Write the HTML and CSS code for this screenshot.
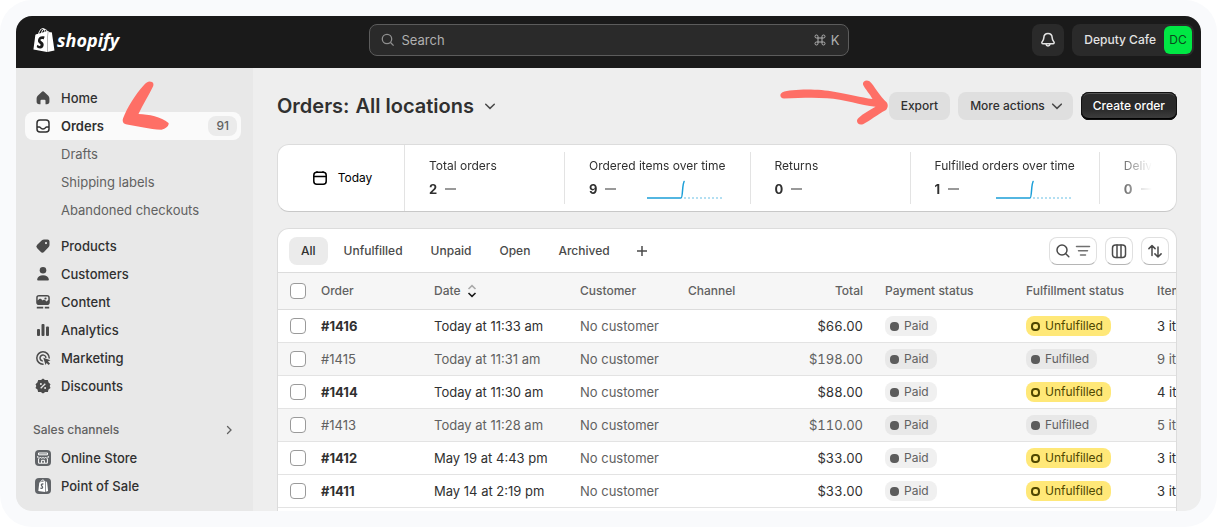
FILE: index.html
```html
<!DOCTYPE html>
<html lang="en">
<head>
<meta charset="utf-8">
<meta name="viewport" content="width=device-width, initial-scale=1">
<title>Orders</title>
<link rel="stylesheet" href="styles.css">
</head>
<body>
<div class="frame">
<div class="app">
  <header class="topbar">
    <a class="brand" href="#">
      <svg class="brand-mark" viewBox="0 0 24 24" aria-hidden="true"><path fill="#fff" d="M15.337 23.979l7.216-1.561s-2.604-17.613-2.625-17.73c-.018-.116-.114-.192-.211-.192s-1.929-.136-1.929-.136-1.275-1.274-1.439-1.411c-.045-.037-.075-.057-.121-.074l-.914 21.104h.023zM11.71 11.305s-.81-.424-1.774-.424c-1.447 0-1.504.906-1.504 1.141 0 1.232 3.24 1.715 3.24 4.629 0 2.295-1.44 3.76-3.406 3.76-2.354 0-3.54-1.465-3.54-1.465l.646-2.086s1.245 1.066 2.28 1.066c.675 0 .975-.545.975-.932 0-1.619-2.654-1.694-2.654-4.359-.034-2.237 1.571-4.416 4.827-4.416 1.257 0 1.875.361 1.875.361l-.945 2.715-.02.01zM11.17.83c.136 0 .271.038.405.135-.984.465-2.064 1.639-2.508 3.992-.656.213-1.293.405-1.889.578C7.697 3.75 8.951.84 11.17.84V.83zm1.235 2.949v.135c-.754.232-1.583.484-2.394.736.466-1.777 1.333-2.645 2.085-2.971.193.501.309 1.176.309 2.1zm.539-2.234c.694.074 1.141.867 1.429 1.755-.349.114-.735.231-1.158.366v-.252c0-.752-.096-1.371-.271-1.871v.002zm2.992 1.289c-.02 0-.06.021-.078.021s-.289.075-.714.21c-.423-1.233-1.176-2.37-2.508-2.37h-.115C12.135.209 11.669 0 11.265 0 8.159 0 6.675 3.877 6.21 5.846c-1.194.365-2.063.636-2.16.674-.675.213-.694.232-.772.87-.075.462-1.83 14.063-1.83 14.063L15.009 24l.927-21.166z"/></svg>
      <span class="brand-name">shopify</span>
    </a>
    <label class="search">
      <svg class="search-icon" viewBox="0 0 16 16" aria-hidden="true"><circle cx="7" cy="7" r="4.7"/><path d="M10.5 10.5 13.6 13.6"/></svg>
      <input class="search-input" type="text" placeholder="Search" aria-label="Search">
      <span class="search-key"><svg class="cmd" viewBox="0 0 12 12" aria-hidden="true"><path d="M4 4V2.6A1.5 1.5 0 1 0 2.6 4H9.4A1.5 1.5 0 1 0 8 2.6V9.4A1.5 1.5 0 1 0 9.4 8H2.6A1.5 1.5 0 1 0 4 9.4Z"/></svg>K</span>
    </label>
    <div class="top-actions">
      <button class="top-btn bell" aria-label="Notifications"><svg viewBox="0 0 20 20" aria-hidden="true"><path d="M10 3.6c-2.6 0-4.1 1.9-4.2 4.3-.1 2-.5 2.6-1.6 3.8-.8.9-.4 2.1.9 2.1h9.8c1.300 0 1.700-1.200.9-2.100-1.100-1.200-1.500-1.800-1.600-3.800C14.100 5.500 12.600 3.600 10 3.600Z"/><path d="M7.900 14.200a2.150 2.150 0 0 0 4.200 0"/></svg></button>
      <button class="top-btn store">Deputy Cafe<span class="avatar">DC</span></button>
    </div>
  </header>

  <div class="body">
    <nav class="sidebar">
      <a class="nav-item" href="#"><svg class="ico" viewBox="0 0 20 20" aria-hidden="true"><path d="M8.700 3.900a1.800 1.800 0 0 1 2.600 0l4 3.900c.7.700 1.100 1.600 1.100 2.600v3.300c0 1.500-1 2.500-2.500 2.500h-1.400v-3.400a1 1 0 0 0-1-1h-3a1 1 0 0 0-1 1v3.400H6.100c-1.500 0-2.500-1-2.500-2.500v-3.300c0-1 .4-1.900 1.100-2.600Z"/></svg>Home</a>
      <div class="nav-current">
        <a class="nav-item is-active" href="#" aria-current="page"><svg class="ico line" viewBox="0 0 20 20" aria-hidden="true"><rect x="4" y="4" width="12" height="12" rx="3"/><path d="M4 11h2.300c.5 0 .8.200 1.100.6.6.8 1.300 1.300 2.600 1.300s2-.5 2.600-1.300c.3-.4.6-.6 1.100-.6H16"/></svg>Orders<span class="count">91</span></a>
        <svg class="mark mark-nav" viewBox="0 0 48 50" aria-hidden="true"><path d="M31 2C28 .5 25.500 2.200 23 5 14 15 6.500 27 2 38.500 1 42 2.500 44 6 44.500c11 1.500 22 5 34.500 5.200C45 49 48.500 45 47.500 43 40 36.500 28 34.500 17.500 34 22 24 28 15 32 6.500 32.800 4.500 32.500 3 31 2Z"/></svg>
      </div>
      <a class="nav-item sub" href="#">Drafts</a>
      <a class="nav-item sub" href="#">Shipping labels</a>
      <a class="nav-item sub last" href="#">Abandoned checkouts</a>
      <a class="nav-item" href="#"><svg class="ico" viewBox="0 0 20 20" aria-hidden="true"><path fill-rule="evenodd" d="M11 3.500h3.500a2 2 0 0 1 2 2V9c0 .8-.3 1.500-.8 2l-4.500 4.700a2.500 2.500 0 0 1-3.600 0L4.200 12.300a2.500 2.500 0 0 1 0-3.600L8.900 4.300c.6-.5 1.300-.8 2.100-.8ZM13 8.200a1.100 1.100 0 1 0 0-2.200 1.100 1.100 0 0 0 0 2.200Z"/></svg>Products</a>
      <a class="nav-item" href="#"><svg class="ico" viewBox="0 0 20 20" aria-hidden="true"><circle cx="10" cy="6.300" r="3.300"/><path d="M4.200 15c.5-2.200 2.800-3.700 5.800-3.700s5.300 1.500 5.800 3.700c.2 1-.4 1.600-1.300 1.600h-9c-.9 0-1.500-.6-1.300-1.600Z"/></svg>Customers</a>
      <a class="nav-item" href="#"><svg class="ico" viewBox="0 0 20 20" aria-hidden="true"><path fill-rule="evenodd" d="M6 3h8a2.800 2.800 0 0 1 2.800 2.800v4.400A2.800 2.800 0 0 1 14 13H6a2.800 2.800 0 0 1-2.800-2.800V5.800A2.800 2.800 0 0 1 6 3Zm0 1.500c-.8 0-1.300.5-1.300 1.300v2.800l1.500-1.500c.6-.6 1.300-.6 1.900 0l1.500 1.500.6-.5c.6-.6 1.300-.6 1.900 0l1.300 1.300 1.900-1.500V5.800c0-.8-.5-1.300-1.300-1.300Z"/><circle cx="12.500" cy="6.500" r="1.100"/><path d="M3.800 14.800h6.400v1.600H3.800zM11.800 14.800h4.400v1.600h-4.400z"/></svg>Content</a>
      <a class="nav-item" href="#"><svg class="ico" viewBox="0 0 20 20" aria-hidden="true"><rect x="4" y="9" width="3" height="7" rx="1"/><rect x="8.500" y="4" width="3" height="12" rx="1"/><rect x="13" y="6.500" width="3" height="9.500" rx="1"/></svg>Analytics</a>
      <a class="nav-item" href="#"><svg class="ico" viewBox="0 0 20 20" aria-hidden="true"><path class="arc" d="M16.200 10A6.200 6.200 0 1 0 10 16.200M12.900 9.200A3 3 0 1 0 9.200 12.900"/><path d="M10.300 9.700 17.500 12.200 14.900 13.500 17 15.600 15.700 17 13.600 14.900 12.500 17Z"/></svg>Marketing</a>
      <a class="nav-item" href="#"><svg class="ico" viewBox="0 0 20 20" aria-hidden="true"><path d="M10 2.500 12 4.100 14.800 3.900 15.600 6.600 17.500 8.200 16.700 10 17.500 12 15.500 13.500 14.900 16.100 12.200 16 10 17.500 7.800 16 5.100 16.100 4.500 13.500 2.500 12 3.300 10 2.500 8.200 4.400 6.600 5.200 3.900 8 4.100Z"/><path class="cut" d="M7.700 12.300 12.300 7.700"/><circle class="hole" cx="7.900" cy="8" r="1"/><circle class="hole" cx="12.100" cy="12" r="1"/></svg>Discounts</a>
      <a class="nav-head" href="#">Sales channels<svg class="chev" viewBox="0 0 16 16" aria-hidden="true"><path d="m6.500 4.500 3.500 3.500-3.500 3.500"/></svg></a>
      <a class="nav-item" href="#"><svg class="ico app-ico" viewBox="0 0 20 20" aria-hidden="true"><rect x="2" y="2" width="16" height="16" rx="4"/><path class="w" d="M5.500 5h9v1.800h-9zM4.800 8 4.700 9.300C5 10.500 7 10.500 7.400 9.300 8 10.500 9.600 10.500 10 9.300 10.400 10.500 12 10.500 12.600 9.300 13 10.500 15 10.500 15.300 9.300L15.200 8M5.600 10.800V15.200H14.400V10.800M8.600 15V12.300H11.400V15"/></svg>Online Store</a>
      <a class="nav-item" href="#"><svg class="ico app-ico" viewBox="0 0 20 20" aria-hidden="true"><rect x="2" y="2" width="16" height="16" rx="4"/><path fill="#fff" d="m6.300 6.600 5.800-1.700v11.200l-6.800-1.200ZM12.800 5l1.300 1.400 1 8.700-2.300.7Z"/><path class="w" d="M7.700 6.300C8 4 10.700 3 11.300 5.300"/><path class="s" d="M10.400 8.200C8.600 7.600 7.800 8.800 8.700 9.800 9.800 10.800 10.400 12.800 7.400 12.200"/></svg>Point of Sale</a>
    </nav>

    <main class="main">
      <div class="page-head">
        <h1 class="title"><span>Orders:</span><button class="location">All locations<svg class="chev" viewBox="0 0 16 16" aria-hidden="true"><path d="M3.700 6.200 8 10.400 12.300 6.200"/></svg></button></h1>
        <div class="head-actions">
          <div class="export">
            <button class="btn">Export</button>
            <svg class="mark mark-export" viewBox="0 0 110 46" aria-hidden="true"><path d="M3.500 12.200C12 8.700 40 8.500 55 11.700 70 14 82 17.500 93.500 19 91 14 86 9 84.200 5 83 2 86.500-.8 90.500 1.300 95 5 101 17 107.800 22.500 109.300 24.500 109 28 107 30 98 34.500 91 41 84 44.200 79 46 76 41 79.500 38 84 33.500 91 30 96.500 26.700 82 25.500 65 19 48 18.200 33 17 20 18 5 18.500 1 18.500 0 14 3.500 12.200Z"/></svg>
          </div>
          <button class="btn">More actions<svg class="chev thick" viewBox="0 0 16 16" aria-hidden="true"><path d="M3.700 6.200 8 10.400 12.300 6.200"/></svg></button>
          <button class="btn primary">Create order</button>
        </div>
      </div>

      <section class="card metrics">
        <button class="period"><svg class="ico cal" viewBox="0 0 20 20" aria-hidden="true"><rect x="3.800" y="4.300" width="12.400" height="11.900" rx="3"/><path d="M3.800 8.500h12.400M7 3.200v1.500M13 3.200v1.500"/></svg>Today</button>
        <div class="metric-list">
          <div class="metric"><div class="metric-name">Total orders</div><div class="metric-row"><b>2</b><i class="dash"></i></div></div>
          <div class="metric"><div class="metric-name">Ordered items over time</div><div class="metric-row"><b>9</b><i class="dash"></i><svg class="spark" viewBox="0 0 80 20" aria-hidden="true"><path d="M1 19H35C37 19 36 4 38.500 2"/><path class="dots" d="M38 19H77"/></svg></div></div>
          <div class="metric"><div class="metric-name">Returns</div><div class="metric-row"><b>0</b><i class="dash"></i></div></div>
          <div class="metric"><div class="metric-name">Fulfilled orders over time</div><div class="metric-row"><b>1</b><i class="dash"></i><svg class="spark" viewBox="0 0 80 20" aria-hidden="true"><path d="M1 19H35C37 19 36 4 38.500 2"/><path class="dots" d="M38 19H77"/></svg></div></div>
          <div class="metric"><div class="metric-name">Delivered</div><div class="metric-row"><b>0</b><i class="dash"></i></div></div>
        </div>
      </section>

      <section class="card orders">
        <div class="toolbar">
          <div class="tabs">
            <button class="tab is-on">All</button><button class="tab">Unfulfilled</button><button class="tab">Unpaid</button><button class="tab">Open</button><button class="tab">Archived</button><button class="tab add" aria-label="Add view"><svg class="plus" viewBox="0 0 16 16" aria-hidden="true"><path d="M8 3v10M3 8h10"/></svg></button>
          </div>
          <div class="tools">
            <button class="tool wide" aria-label="Search and filter"><svg viewBox="0 0 20 20" aria-hidden="true"><circle cx="9" cy="9" r="5"/><path d="m12.800 12.800 3 3"/></svg><svg class="grey" viewBox="0 0 20 20" aria-hidden="true"><path d="M3.500 5.500h13M5.500 9.700h9M7.500 13.900h5"/></svg></button>
            <button class="tool" aria-label="Columns"><svg viewBox="0 0 20 20" aria-hidden="true"><rect x="3.500" y="4" width="13" height="12.500" rx="3"/><path d="M8 4v12.500M12 4v12.500"/></svg></button>
            <button class="tool" aria-label="Sort"><svg viewBox="0 0 20 20" aria-hidden="true"><path d="M7 14.500V4.500M3.900 7.600 7 4.500l3.100 3.100M13 6v10M9.900 12.900 13 16l3.100-3.100"/></svg></button>
          </div>
        </div>
        <table class="table">
          <colgroup><col class="c-check"><col class="c-order"><col class="c-date"><col class="c-customer"><col class="c-channel"><col class="c-total"><col class="c-pay"><col class="c-ship"><col class="c-items"></colgroup>
          <thead>
            <tr><th><input class="check" type="checkbox" aria-label="Select all orders"></th><th>Order</th><th><span class="sort">Date<svg class="sort-ico" viewBox="0 0 10 14" aria-hidden="true"><path class="up" d="M1.500 5 5 1.700 8.500 5"/><path d="M1.500 9 5 12.300 8.500 9"/></svg></span></th><th>Customer</th><th>Channel</th><th class="num">Total</th><th>Payment status</th><th>Fulfillment status</th><th>Items</th></tr>
          </thead>
          <tbody>
            <tr><td><input class="check" type="checkbox" aria-label="Select order 1416"></td><td class="id">#1416</td><td>Today at 11:33 am</td><td class="soft">No customer</td><td></td><td class="num">$66.00</td><td><span class="badge">Paid</span></td><td><span class="badge warn">Unfulfilled</span></td><td>3 items</td></tr>
            <tr class="done"><td><input class="check" type="checkbox" aria-label="Select order 1415"></td><td class="id">#1415</td><td>Today at 11:31 am</td><td class="soft">No customer</td><td></td><td class="num">$198.00</td><td><span class="badge">Paid</span></td><td><span class="badge">Fulfilled</span></td><td>9 items</td></tr>
            <tr><td><input class="check" type="checkbox" aria-label="Select order 1414"></td><td class="id">#1414</td><td>Today at 11:30 am</td><td class="soft">No customer</td><td></td><td class="num">$88.00</td><td><span class="badge">Paid</span></td><td><span class="badge warn">Unfulfilled</span></td><td>4 items</td></tr>
            <tr class="done"><td><input class="check" type="checkbox" aria-label="Select order 1413"></td><td class="id">#1413</td><td>Today at 11:28 am</td><td class="soft">No customer</td><td></td><td class="num">$110.00</td><td><span class="badge">Paid</span></td><td><span class="badge">Fulfilled</span></td><td>5 items</td></tr>
            <tr><td><input class="check" type="checkbox" aria-label="Select order 1412"></td><td class="id">#1412</td><td>May 19 at 4:43 pm</td><td class="soft">No customer</td><td></td><td class="num">$33.00</td><td><span class="badge">Paid</span></td><td><span class="badge warn">Unfulfilled</span></td><td>3 items</td></tr>
            <tr><td><input class="check" type="checkbox" aria-label="Select order 1411"></td><td class="id">#1411</td><td>May 14 at 2:19 pm</td><td class="soft">No customer</td><td></td><td class="num">$33.00</td><td><span class="badge">Paid</span></td><td><span class="badge warn">Unfulfilled</span></td><td>3 items</td></tr>
          </tbody>
        </table>
      </section>
    </main>
  </div>
</div>
</div>
</body>
</html>
```
FILE: styles.css
```css
*, *::before { box-sizing: border-box; }
body {
  margin: 0;
  background: #fff;
  color: #303030;
  font-family: Inter, "Liberation Sans", sans-serif;
  font-size: 13px;
  font-weight: 400;
  line-height: 20px;
}
button, input { font: inherit; color: inherit; }
button { border: 0; background: none; padding: 0; white-space: nowrap; }
a { color: inherit; text-decoration: none; }
svg { display: block; flex: none; }

.frame {
  height: 100vh;
  padding: 16px;
  border-radius: 32px;
  background: #f9fafc;
}
.app {
  display: flex;
  flex-direction: column;
  height: 100%;
  overflow: hidden;
  border-radius: 16px;
  background: #eee;
}

/* Top bar */
.topbar {
  display: grid;
  grid-template-columns: 1fr minmax(0, 480px) 1fr;
  align-items: start;
  height: 52px;
  padding: 8px 7px 0;
  background: #1a1a1a;
  color: #e3e3e3;
}
.brand { display: flex; align-items: center; gap: 1px; height: 32px; padding-left: 9px; color: #fff; }
.brand-mark { width: 24px; height: 24px; }
.brand-name { font: italic 700 18px/24px "Open Sans", sans-serif; }
.search {
  display: flex;
  align-items: center;
  gap: 6px;
  height: 32px;
  padding: 0 8px 0 10px;
  border: 1px solid #5c5c5c;
  border-radius: 8px;
  background: #2a2a2a;
  color: #b0b0b0;
}
.search-icon { width: 16px; height: 16px; fill: none; stroke: #8f8f8f; stroke-width: 1.3; }
.search-input { flex: 1; min-width: 0; padding: 0; border: 0; outline: 0; background: none; }
.search-input::placeholder { color: #b0b0b0; opacity: 1; }
.search-key { display: flex; align-items: center; gap: 5px; }
.cmd { width: 12px; height: 12px; fill: none; stroke: #b0b0b0; }
.top-actions { display: flex; justify-content: flex-end; gap: 8px; }
.top-btn { height: 32px; border-radius: 8px; background: #2a2a2a; }
.bell { display: grid; place-items: center; width: 32px; }
.bell svg { width: 20px; height: 20px; fill: none; stroke: #e3e3e3; stroke-width: 1.5; }
.store { display: flex; align-items: center; gap: 8px; padding: 0 2px 0 12px; font-size: 12px; font-weight: 500; }
.avatar { width: 28px; border-radius: 6px; background: #00e844; color: #0a4a1c; line-height: 28px; font-weight: 400; text-align: center; }

.body { display: flex; flex: 1; min-height: 0; }

/* Navigation */
.sidebar { flex: none; width: 237px; padding: 16px 12px 0 9px; background: #e8e8e8; }
.nav-item {
  display: flex;
  align-items: center;
  gap: 8px;
  height: 28px;
  padding: 0 4px 0 8px;
  border-radius: 8px;
  font-weight: 550;
}
.nav-item.is-active { background: #fafafa; font-weight: 600; }
.nav-item.sub { padding-left: 36px; color: #616161; font-weight: 400; }
.nav-item.last { margin-bottom: 8px; }
.nav-current { position: relative; }
.count { margin-left: auto; padding: 0 8px; border-radius: 8px; background: #ebebeb; color: #616161; font-size: 12px; font-weight: 500; }
.ico { width: 20px; height: 20px; fill: #4a4a4a; }
.ico.line { fill: none; stroke: #303030; stroke-width: 1.5; }
.arc { fill: none; stroke: #4a4a4a; stroke-width: 1.5; stroke-linecap: round; }
.cut { stroke: #e8e8e8; stroke-width: 1.3; }
.hole { fill: #e8e8e8; }
.app-ico { fill: #616468; }
.app-ico .w { fill: none; stroke: #fff; }
.app-ico .s { fill: none; stroke: #616468; stroke-width: 1.3; }
.nav-head {
  display: flex;
  align-items: center;
  justify-content: space-between;
  height: 28px;
  margin-top: 16px;
  padding: 0 4px 0 8px;
  color: #616161;
  font-size: 12px;
  font-weight: 550;
}
.chev { width: 16px; height: 16px; fill: none; stroke: #616161; stroke-width: 1.3; stroke-linecap: round; }

/* Hand-drawn pointers over the page */
.mark { position: absolute; z-index: 2; fill: #fe6f66; pointer-events: none; }
.mark-nav { left: 96px; top: -32px; width: 48px; height: 50px; }
.mark-export { right: 100%; top: -12px; width: 110px; height: 46px; }

/* Page */
.main { display: flex; flex: 1; flex-direction: column; min-width: 0; padding: 24px 24px 0; }
.page-head { display: flex; align-items: center; justify-content: space-between; margin-bottom: 24px; }
.title { display: flex; align-items: center; gap: 6px; margin: 0; font-size: 20px; line-height: 28px; font-weight: 600; }
.location { display: flex; align-items: center; gap: 8px; }
.location .chev { stroke: #4a4a4a; stroke-width: 1.5; }
.head-actions { display: flex; gap: 8px; }
.export { position: relative; }
.btn {
  display: flex;
  align-items: center;
  gap: 4px;
  height: 28px;
  padding: 0 12px;
  border-radius: 8px;
  background: #dfdfdf;
  font-size: 12px;
  font-weight: 550;
}
.btn .thick { margin-right: -4px; stroke: #4a4a4a; stroke-width: 1.6; }
.btn.primary {
  background: linear-gradient(#2a2a2a 60%, #404040);
  box-shadow: inset 0 0 0 1px #111, inset 0 2px 0 #555, inset 0 -2px 0 #000;
  color: #fff;
}
.card { border: 1px solid #dcdcdc; border-radius: 12px; background: #fff; overflow: hidden; }

.metrics { display: flex; flex: none; height: 68px; margin-bottom: 16px; border-bottom-color: #c8c8c8; font-size: 12px; }
.period {
  display: flex;
  flex: none;
  align-items: center;
  justify-content: center;
  gap: 8px;
  width: 127px;
  border-right: 1px solid #e3e3e3;
  color: #000;
}
.cal { fill: none; stroke: #000; stroke-width: 1.5; }
.metric-list {
  display: flex;
  flex: 1;
  min-width: 0;
  margin: 7px 24px 7px 0;
  overflow: hidden;
  -webkit-mask-image: linear-gradient(to left, transparent, #000 40px);
  mask-image: linear-gradient(to left, transparent, #000 40px);
}
.metric { flex: none; min-width: 160px; padding: 4px 24px 0; border-right: 1px solid #e3e3e3; white-space: nowrap; }
.metric-row { display: flex; align-items: center; gap: 8px; height: 26px; }
.metric-row b { font-size: 13px; font-weight: 650; }
.dash { width: 11px; height: 2px; background: #999; }
.spark { width: 80px; height: 20px; margin-left: auto; fill: none; stroke: #1b9fd8; stroke-width: 1.5; }
.dots { stroke: #9ad5ee; stroke-dasharray: 2 2; }

/* Orders list */
.orders { flex: 1; border-bottom: 0; border-radius: 12px 12px 0 0; }
.toolbar {
  display: flex;
  justify-content: space-between;
  height: 44px;
  padding: 8px 7px 7px 11px;
  border-bottom: 1px solid #dcdcdc;
}
.tabs, .tools { display: flex; }
.tabs { gap: 4px; }
.tools { gap: 8px; }
.tab { height: 28px; padding: 0 12px; border-radius: 8px; color: #4a4a4a; font-size: 12px; font-weight: 550; }
.tab.is-on { background: #ebebeb; color: #303030; }
.tab.add { padding: 0 8px; }
.plus { width: 16px; height: 16px; fill: none; stroke: #4a4a4a; stroke-width: 1.5; }
.tool {
  display: flex;
  align-items: center;
  justify-content: center;
  width: 28px;
  height: 28px;
  border: 1px solid #e0e0e0;
  border-bottom-color: #b5b5b5;
  border-radius: 8px;
}
.tool.wide { width: 48px; }
.tool svg { width: 20px; height: 20px; fill: none; stroke: #4a4a4a; stroke-width: 1.5; stroke-linecap: round; stroke-linejoin: round; }
.tool svg.grey { stroke: #707070; }

.table { width: 100%; min-width: 980px; table-layout: fixed; border-collapse: separate; border-spacing: 0; }
.c-check { width: 35px; }
.c-order { width: 113px; }
.c-date { width: 146px; }
.c-customer { width: 108px; }
.c-channel { width: 100px; }
.c-total { width: 97px; }
.c-pay { width: 141px; }
.c-ship { width: 131px; }
.table th, .table td { padding: 0 14px 0 8px; border-bottom: 1px solid #e3e3e3; text-align: left; white-space: nowrap; }
.table th { height: 37px; border-color: #dcdcdc; background: #f6f6f6; color: #616161; font-size: 12px; font-weight: 550; }
.table td { height: 33px; }
.table th:first-child, .table td:first-child { padding: 0 0 0 12px; }
.table .num { text-align: right; font-variant-numeric: tabular-nums; }
.id { font-weight: 700; }
.soft { color: #616161; }
.done td { background: #f6f6f6; color: #616161; }
.done .id { font-weight: 400; }
.sort { display: flex; align-items: center; gap: 6px; }
.sort-ico { width: 10px; height: 14px; fill: none; stroke: #1a1a1a; stroke-width: 1.6; }
.sort-ico .up { stroke: #aaa; }
.check { appearance: none; display: block; width: 16px; height: 16px; margin: 0; border: 1px solid #9a9a9a; border-radius: 4px; background: #fff; }
.badge {
  display: flex;
  align-items: center;
  gap: 5px;
  width: max-content;
  padding: 0 8px 0 5px;
  border-radius: 8px;
  background: #f0f0f0;
  color: #616161;
  font-size: 12px;
}
.badge::before { content: ""; width: 9px; height: 9px; border-radius: 4px; background: #5c5c5c; }
.done .badge { background: #e8e8e8; }
.badge.warn { background: #ffe878; color: #4f4700; }
.badge.warn::before { border: 2px solid #4f4700; background: none; }
```
